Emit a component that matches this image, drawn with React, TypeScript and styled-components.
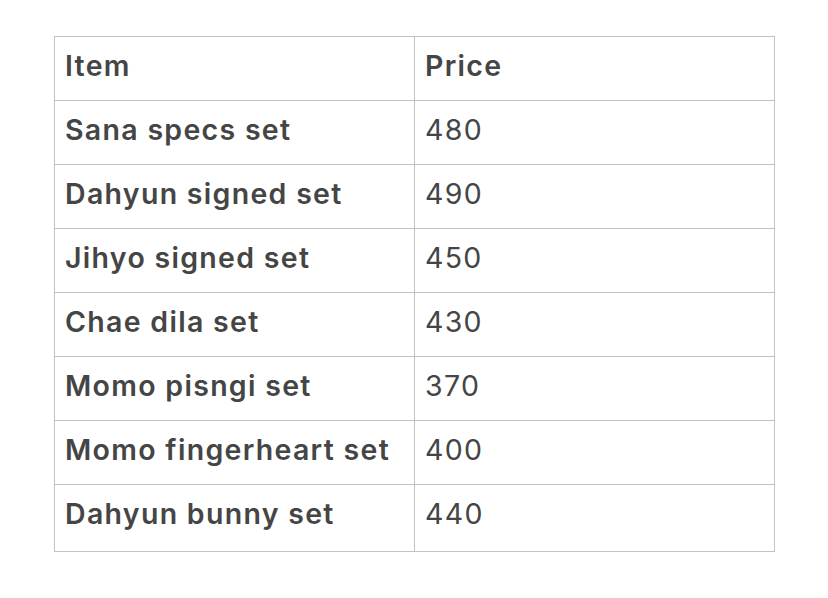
import styled, { createGlobalStyle } from 'styled-components';

const GlobalStyle = createGlobalStyle`
  html, body {
    margin: 0;
    padding: 0;
    background: #ffffff;
  }
  body {
    font-family: Inter, "Open Sans", "Liberation Sans", sans-serif;
  }
`;

const Page = styled.div`
  width: 828px;
  height: 598px;
  padding: 36px 0 0 54px;
  box-sizing: border-box;
  background: #ffffff;
`;

const Table = styled.table`
  border-collapse: collapse;
  width: 720px;
  table-layout: fixed;
  color: #454545;
  font-size: 28.5px;
  letter-spacing: 1.3px;
`;

const Row = styled.tr<{ $last?: boolean }>`
  height: ${({ $last }) => ($last ? '67px' : '64px')};
`;

const Cell = styled.td<{ $bold?: boolean; $last?: boolean }>`
  border: 1px solid #c3c3c3;
  padding: 0 0 ${({ $last }) => ($last ? '7px' : '4px')} 10px;
  vertical-align: middle;
  font-weight: ${({ $bold }) => ($bold ? 600 : 400)};
  white-space: nowrap;
  line-height: 1;
`;

const items = [
  { name: 'Sana specs set', price: '480' },
  { name: 'Dahyun signed set', price: '490' },
  { name: 'Jihyo signed set', price: '450' },
  { name: 'Chae dila set', price: '430' },
  { name: 'Momo pisngi set', price: '370' },
  { name: 'Momo fingerheart set', price: '400' },
  { name: 'Dahyun bunny set', price: '440' },
];

const App = () => {
  return (
    <>
      <GlobalStyle />
      <Page>
        <Table>
          <colgroup>
            <col style={{ width: '360px' }} />
            <col style={{ width: '360px' }} />
          </colgroup>
          <tbody>
            <Row>
              <Cell $bold>Item</Cell>
              <Cell $bold>Price</Cell>
            </Row>
            {items.map((item, i) => {
              const last = i === items.length - 1;
              return (
                <Row key={item.name} $last={last}>
                  <Cell $bold $last={last}>
                    {item.name}
                  </Cell>
                  <Cell $last={last}>{item.price}</Cell>
                </Row>
              );
            })}
          </tbody>
        </Table>
      </Page>
    </>
  );
};

export default App;
